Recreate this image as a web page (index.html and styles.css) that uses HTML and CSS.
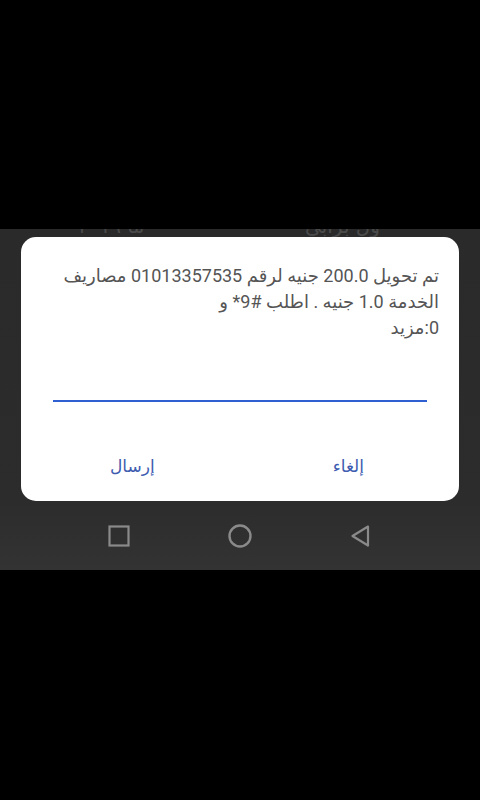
FILE: index.html
```html
<!DOCTYPE html>
<html lang="ar">
<head>
<meta charset="utf-8">
<title>USSD</title>
<link rel="stylesheet" href="styles.css">
</head>
<body>
<div class="top"></div>
<div class="screen">
  <div class="behind">
    <span class="behind-left">ما ٢٠١٩</span>
    <span class="behind-right">ول برابي</span>
  </div>
  <div class="dialog">
    <p class="message" dir="rtl">تم تحويل 200.0 جنيه لرقم 01013357535 مصاريف<br>الخدمة 1.0 جنيه . اطلب #9* و<br>0:مزيد</p>
    <div class="field"></div>
    <div class="actions">
      <span class="btn">إرسال</span>
      <span class="btn">إلغاء</span>
    </div>
  </div>
  <div class="nav">
    <svg class="nav-icon" viewBox="0 0 24 24" width="24" height="24"><rect x="2.5" y="2.5" width="19" height="19" fill="none" stroke="#8a8a8a" stroke-width="2.2"/></svg>
    <svg class="nav-icon" viewBox="0 0 26 26" width="26" height="26"><circle cx="13" cy="13" r="10.5" fill="none" stroke="#8a8a8a" stroke-width="2.4"/></svg>
    <svg class="nav-icon" viewBox="0 0 24 24" width="24" height="24"><path d="M20 2.5 L4.5 12 L20 21.5 Z" fill="none" stroke="#8a8a8a" stroke-width="2.2" stroke-linejoin="round"/></svg>
  </div>
</div>
</body>
</html>
```
FILE: styles.css
```css
html, body {
  margin: 0;
  padding: 0;
  background: #000;
  width: 480px;
  height: 800px;
  overflow: hidden;
}

.top {
  height: 229px;
}

.screen {
  height: 341px;
  background: linear-gradient(#2a2a2a, #2c2c2c 80%, #333 100%);
  display: flex;
  flex-direction: column;
}

.behind {
  height: 8px;
  overflow: hidden;
  display: flex;
  justify-content: space-between;
  padding: 0 100px 0 78px;
  font-family: "DejaVu Sans", sans-serif;
  font-size: 20px;
  line-height: 20px;
  color: #4a4a4a;
}

.behind span {
  margin-top: -13px;
}

.dialog {
  margin: 0 21px;
  height: 264px;
  background: #fff;
  border-radius: 15px;
  display: flex;
  flex-direction: column;
}

.message {
  margin: 0;
  padding: 26px 20px 0 20px;
  font-family: Roboto, "DejaVu Sans", sans-serif;
  font-size: 18px;
  line-height: 26px;
  color: #555;
  text-align: right;
}

.field {
  margin: 59px 32px 0 32px;
  height: 2px;
  background: #2f5fd0;
}

.actions {
  display: flex;
  justify-content: space-between;
  padding: 0 95px 0 89px;
  margin-top: 52px;
  font-family: "DejaVu Sans", sans-serif;
  font-size: 17px;
  line-height: 24px;
  color: #3d5cb0;
}

.nav {
  flex: 1;
  display: flex;
  align-items: center;
  justify-content: space-between;
  padding: 0 108px 0 107px;
}

.nav-icon {
  display: block;
}
```
